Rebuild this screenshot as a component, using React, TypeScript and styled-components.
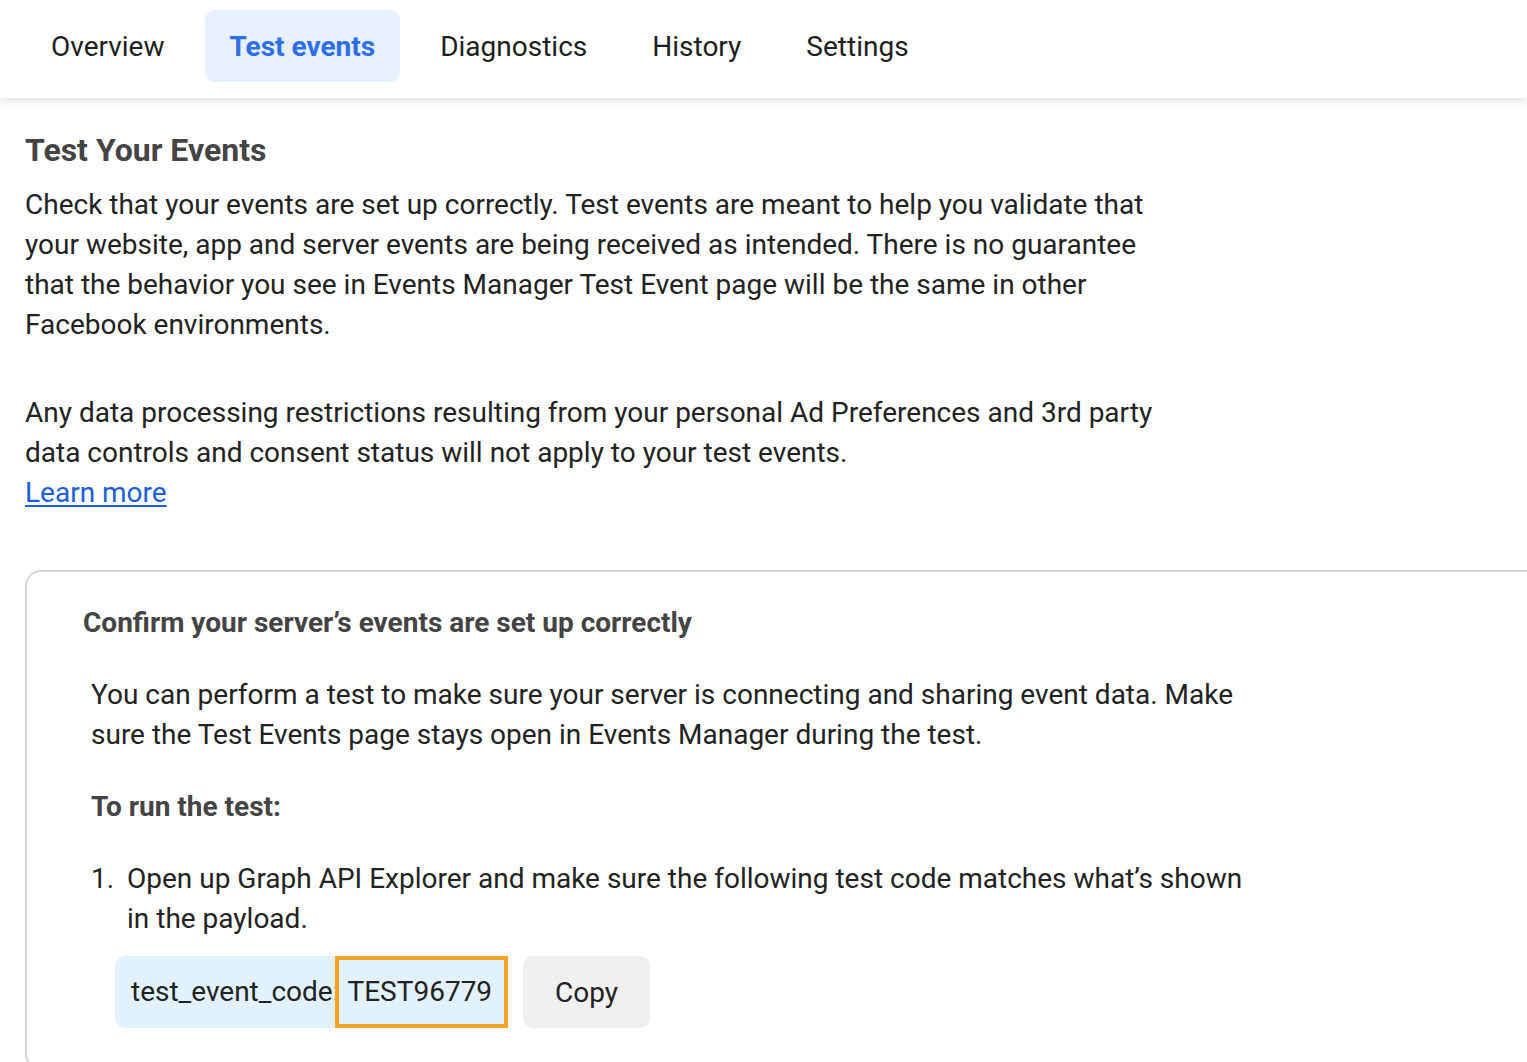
import React from "react";
import styled, { createGlobalStyle } from "styled-components";

const Global = createGlobalStyle`
  html, body { margin: 0; padding: 0; background: #fff; overflow: hidden; }
  body { font-family: Roboto, "Noto Sans", Arial, sans-serif; color: #222; }
`;

const Page = styled.div`
  width: 1527px;
  height: 1062px;
  overflow: hidden;
  background: #fff;
`;

const Header = styled.nav`
  height: 98px;
  box-sizing: border-box;
  padding: 10px 0 0 26px;
  display: flex;
  gap: 15px;
  align-items: flex-start;
  background: #fff;
  box-shadow: 0 3px 8px rgba(0, 0, 0, 0.12);
  position: relative;
  z-index: 1;
`;

const Tab = styled.div<{ $active?: boolean }>`
  height: 72px;
  padding: 0 25px 0 25px;
  display: flex;
  align-items: center;
  border-radius: 10px;
  font-size: 28px;
  font-weight: ${(p) => (p.$active ? 700 : 400)};
  color: ${(p) => (p.$active ? "#2d6fe8" : "#1c1e21")};
  background: ${(p) => (p.$active ? "#e8f0fd" : "transparent")};
`;

const Main = styled.main`
  padding: 34px 0 0 25px;
`;

const Title = styled.h1`
  margin: 0;
  font-size: 32px;
  line-height: 36px;
  font-weight: 700;
  color: #444;
`;

const Para = styled.p<{ $top?: number }>`
  margin: ${(p) => p.$top ?? 0}px 0 0;
  max-width: 1155px;
  font-size: 28px;
  line-height: 40px;
  color: #222;
`;

const Link = styled.a`
  color: #1a5fd8;
  text-decoration: underline;
  text-underline-offset: 3px;
  text-decoration-thickness: 2px;
`;

const Card = styled.section`
  margin-top: 57px;
  width: 1560px;
  box-sizing: border-box;
  border: 2px solid #d4d4d4;
  border-radius: 16px;
  padding: 31px 0 40px 56px;
`;

const CardTitle = styled.h2`
  margin: 0;
  font-size: 28px;
  line-height: 40px;
  font-weight: 700;
  color: #444;
`;

const CardBody = styled.div`
  margin-left: 8px;
  width: 1170px;
`;

const CardText = styled.p<{ $bold?: boolean }>`
  margin: 32px 0 0;
  font-size: 28px;
  line-height: 40px;
  font-weight: ${(p) => (p.$bold ? 700 : 400)};
  color: ${(p) => (p.$bold ? "#444" : "#222")};
`;

const Steps = styled.ol`
  margin: 32px 0 0;
  padding: 0;
  list-style: none;
`;

const Step = styled.li`
  display: flex;
  font-size: 28px;
  line-height: 40px;
  color: #222;
`;

const StepNum = styled.span`
  flex: 0 0 36px;
`;

const StepContent = styled.div`
  flex: 1;
`;

const CodeRow = styled.div`
  margin: 17px 0 0 -12px;
  display: flex;
  align-items: stretch;
  gap: 15px;
`;

const CodePill = styled.div`
  display: flex;
  align-items: stretch;
  height: 72px;
  background: #e1f2fc;
  border-radius: 10px 0 0 10px;
  font-size: 28px;
  color: #222;
`;

const CodeLabel = styled.span`
  display: flex;
  align-items: center;
  padding-left: 16px;
  margin-right: -4px;
  white-space: nowrap;
`;

const CodeValue = styled.span`
  display: flex;
  align-items: center;
  box-sizing: border-box;
  border: 4px solid #f8a326;
  padding: 0 12px 0 8px;
  background: #e1f2fc;
  position: relative;
`;

const CopyButton = styled.button`
  height: 72px;
  width: 127px;
  border: none;
  border-radius: 10px;
  background: #f0f0f0;
  font-family: inherit;
  font-size: 28px;
  color: #222;
  padding: 0;
`;

export default function App() {
  return (
    <Page>
      <Global />
      <Header>
        <Tab>Overview</Tab>
        <Tab $active>Test events</Tab>
        <Tab>Diagnostics</Tab>
        <Tab>History</Tab>
        <Tab>Settings</Tab>
      </Header>
      <Main>
        <Title>Test Your Events</Title>
        <Para $top={17}>
          Check that your events are set up correctly. Test events are meant to help you validate that
          your website, app and server events are being received as intended. There is no guarantee
          that the behavior you see in Events Manager Test Event page will be the same in other
          Facebook environments.
        </Para>
        <Para $top={48}>
          Any data processing restrictions resulting from your personal Ad Preferences and 3rd party
          data controls and consent status will not apply to your test events.
          <br />
          <Link href="#">Learn more</Link>
        </Para>
        <Card>
          <CardTitle>Confirm your server’s events are set up correctly</CardTitle>
          <CardBody>
            <CardText>
              You can perform a test to make sure your server is connecting and sharing event data. Make
              sure the Test Events page stays open in Events Manager during the test.
            </CardText>
            <CardText $bold>To run the test:</CardText>
            <Steps>
              <Step>
                <StepNum>1.</StepNum>
                <StepContent>
                  Open up Graph API Explorer and make sure the following test code matches what’s shown
                  in the payload.
                  <CodeRow>
                    <CodePill>
                      <CodeLabel>test_event_code:</CodeLabel>
                      <CodeValue>TEST96779</CodeValue>
                    </CodePill>
                    <CopyButton>Copy</CopyButton>
                  </CodeRow>
                </StepContent>
              </Step>
            </Steps>
          </CardBody>
        </Card>
      </Main>
    </Page>
  );
}
